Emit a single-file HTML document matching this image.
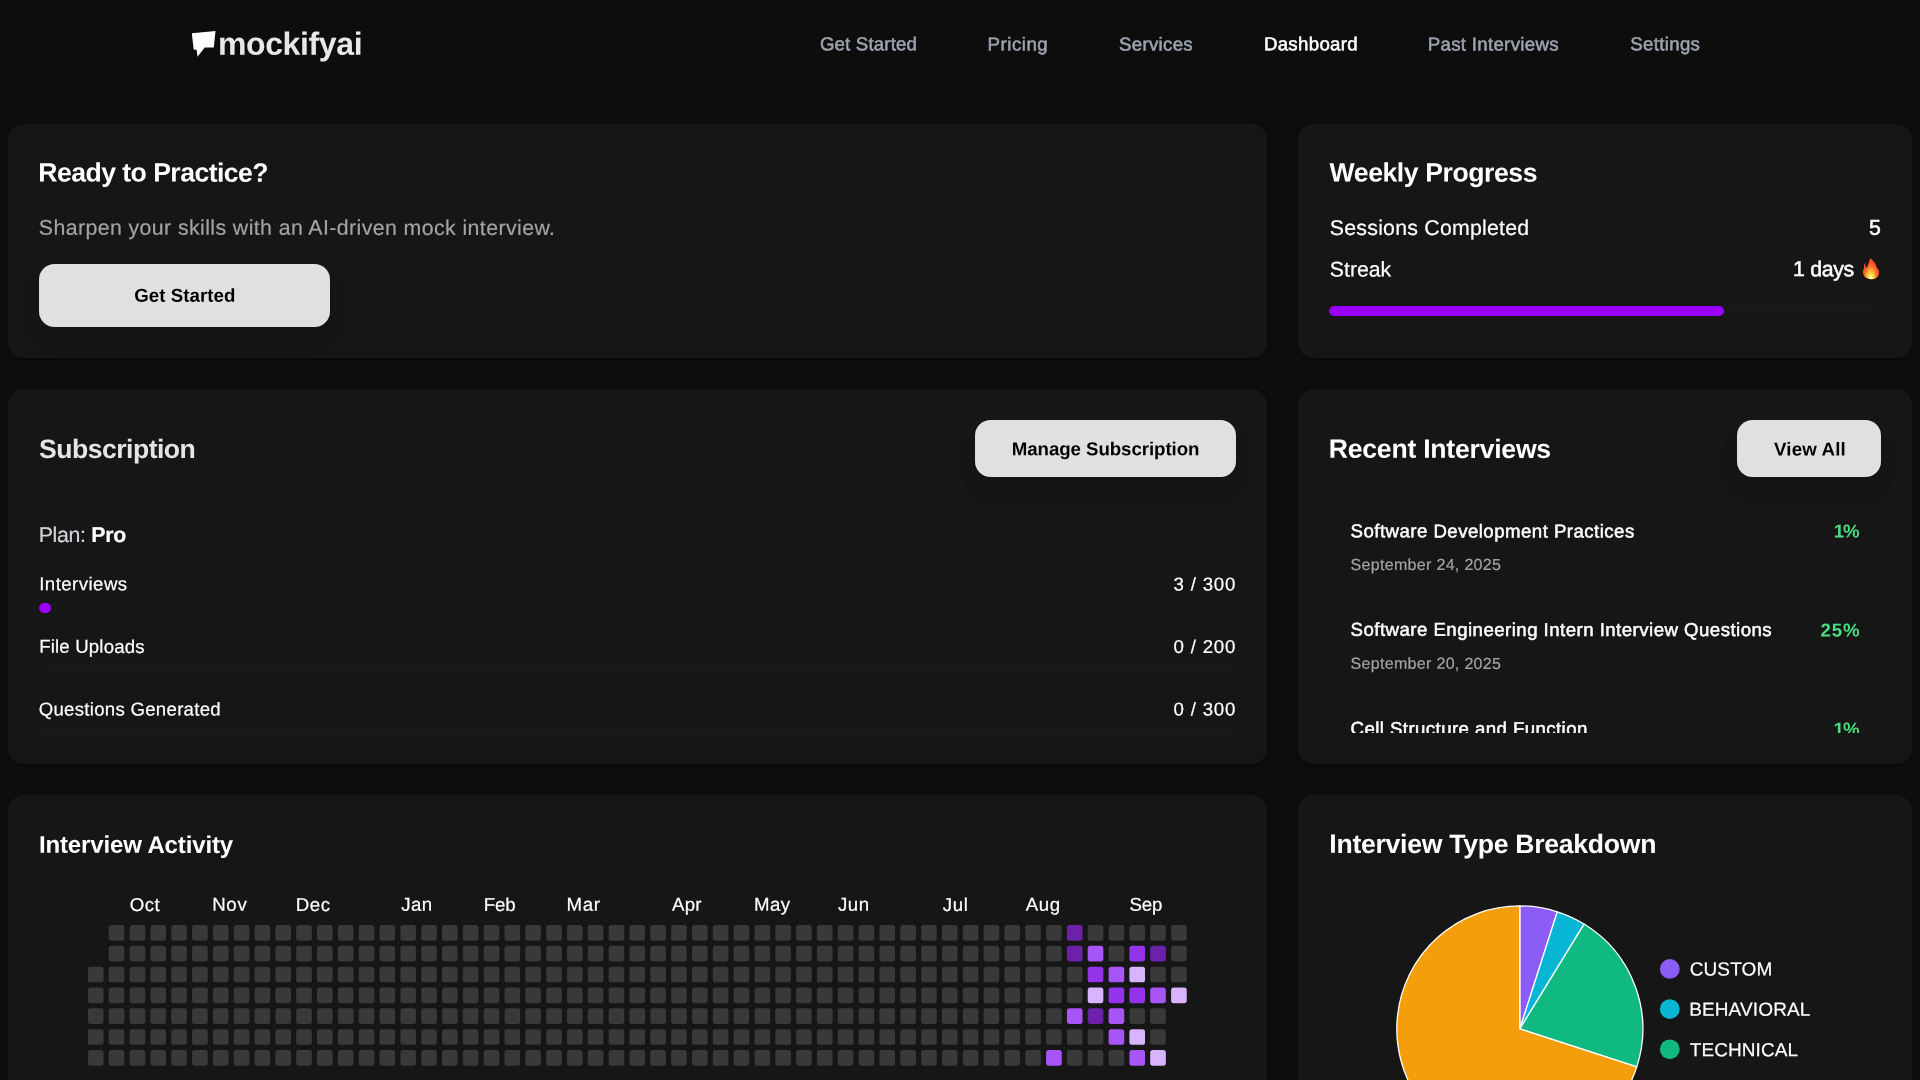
<!DOCTYPE html>
<html lang="en">
<head>
<meta charset="utf-8">
<title>mockifyai – Dashboard</title>
<style>
*{box-sizing:border-box;margin:0;padding:0}
html,body{width:1920px;height:1080px;overflow:hidden;background:#0d0d0d;font-family:"Liberation Sans",sans-serif}
body{position:relative;font-family:"Liberation Sans",sans-serif;color:#fff;-webkit-font-smoothing:antialiased}
#root{position:absolute;left:0;top:0;width:1920px;height:1080px;will-change:transform}
.abs{position:absolute}
.t{position:absolute;white-space:nowrap;line-height:1;-webkit-text-stroke:.2px currentColor;transform-origin:50% 50%;transform:rotate(0.03deg)}
.b{font-weight:700;-webkit-text-stroke:0}
.card{position:absolute;background:#161616;border-radius:15.6px;box-shadow:0 1.3px 4px rgba(0,0,0,.35)}
.btn span{display:inline-block;transform-origin:50% 50%;transform:rotate(0.03deg)}
.btn{position:absolute;background:#e0e0e0;border-radius:15.6px;color:#000;font-weight:700;display:flex;align-items:center;justify-content:center;white-space:nowrap;box-shadow:0 13px 19.5px -4px rgba(0,0,0,.12),0 5px 8px -5px rgba(0,0,0,.12)}
.nav{color:#9ca3af;font-size:18.65px;-webkit-text-stroke:.55px currentColor}
.h2{font-size:26.6px;font-weight:700;-webkit-text-stroke:0}
.track{position:absolute;height:10.4px;border-radius:5.2px;background:#181818}
.fill{position:absolute;left:0;top:0;height:100%;border-radius:5.2px;background:#9900ff}
.lbl{font-size:18.65px}
.med{-webkit-text-stroke:.5px currentColor}
.date{font-size:16px;color:#a3a3a3}
.mon{font-size:18.65px}
.leg{font-size:19px}
.green{-webkit-text-stroke:0;color:#4ade80;font-weight:700;font-size:18.7px}
#logo{letter-spacing:-0.362px;transform:translate(-1.10px,-0.26px) rotate(0.03deg)}
#n1{letter-spacing:0.175px;transform:translate(-0.10px,0.17px) rotate(0.03deg)}
#n2{letter-spacing:0.517px;transform:translate(-0.40px,0.41px) rotate(0.03deg)}
#n3{letter-spacing:0.314px;transform:translate(0.00px,0.45px) rotate(0.03deg)}
#n4{letter-spacing:0.322px;transform:translate(-0.10px,0.28px) rotate(0.03deg)}
#n5{letter-spacing:0.311px;transform:translate(-0.25px,0.42px) rotate(0.03deg)}
#n6{letter-spacing:0.320px;transform:translate(0.35px,0.23px) rotate(0.03deg)}
#c1t{letter-spacing:-0.542px;transform:translate(-0.65px,0.60px) rotate(0.03deg)}
#c1s{letter-spacing:0.411px;transform:translate(-0.20px,0.84px) rotate(0.03deg)}
#b1{letter-spacing:0.050px;transform:translate(1.15px,0.79px) rotate(0.03deg)}
#c2t{letter-spacing:-0.429px;transform:translate(-0.40px,0.60px) rotate(0.03deg)}
#c2a{letter-spacing:0.235px;transform:translate(-0.15px,0.96px) rotate(0.03deg)}
#c2b{letter-spacing:0.000px;transform:translate(0.00px,0.68px) rotate(0.03deg)}
#c2c{letter-spacing:-0.030px;transform:translate(-0.15px,1.42px) rotate(0.03deg)}
#c2d{letter-spacing:-0.330px;transform:translate(0.05px,1.14px) rotate(0.03deg)}
#c3t{letter-spacing:-0.525px;transform:translate(0.05px,0.99px) rotate(0.03deg)}
#b2{letter-spacing:-0.072px;transform:translate(-0.25px,0.25px) rotate(0.03deg)}
#c3p{letter-spacing:-0.310px;transform:translate(-0.35px,2.00px) rotate(0.03deg)}
#c3a{letter-spacing:0.449px;transform:translate(0.20px,0.35px) rotate(0.03deg)}
#c3av{letter-spacing:0.806px;transform:translate(0.55px,0.42px) rotate(0.03deg)}
#c3b{letter-spacing:0.166px;transform:translate(0.15px,0.87px) rotate(0.03deg)}
#c3bv{letter-spacing:0.804px;transform:translate(0.55px,0.95px) rotate(0.03deg)}
#c3c{letter-spacing:0.267px;transform:translate(-0.30px,1.49px) rotate(0.03deg)}
#c3cv{letter-spacing:0.804px;transform:translate(0.55px,1.48px) rotate(0.03deg)}
#c4t{letter-spacing:-0.234px;transform:translate(-1.25px,0.87px) rotate(0.03deg)}
#b3{letter-spacing:0.143px;transform:translate(1.05px,0.50px) rotate(0.03deg)}
#i1{letter-spacing:0.459px;transform:translate(0.55px,1.41px) rotate(0.03deg)}
#g1{letter-spacing:-1.300px;transform:translate(0.85px,1.47px) rotate(0.03deg)}
#d1{letter-spacing:0.318px;transform:translate(0.55px,0.00px) rotate(0.03deg)}
#i2{letter-spacing:0.459px;transform:translate(0.55px,0.93px) rotate(0.03deg)}
#g2{letter-spacing:0.875px;transform:translate(1.55px,1.53px) rotate(0.03deg)}
#d2{letter-spacing:0.318px;transform:translate(0.55px,0.86px) rotate(0.03deg)}
#i3{letter-spacing:0.419px;transform:translate(0.55px,0.93px) rotate(0.03deg)}
#g3{letter-spacing:-1.050px;transform:translate(0.60px,1.53px) rotate(0.03deg)}
#c5t{letter-spacing:-0.134px;transform:translate(-0.05px,0.87px) rotate(0.03deg)}
#c6t{letter-spacing:-0.279px;transform:translate(-0.65px,-0.04px) rotate(0.03deg)}
#mOct{letter-spacing:0.450px;transform:translate(-0.25px,1.90px) rotate(0.03deg)}
#mNov{letter-spacing:0.700px;transform:translate(-0.85px,1.87px) rotate(0.03deg)}
#mDec{letter-spacing:0.550px;transform:translate(-0.20px,1.95px) rotate(0.03deg)}
#mJan{letter-spacing:0.475px;transform:translate(1.20px,1.87px) rotate(0.03deg)}
#mFeb{letter-spacing:-0.100px;transform:translate(-0.35px,1.92px) rotate(0.03deg)}
#mMar{letter-spacing:0.750px;transform:translate(-0.55px,1.83px) rotate(0.03deg)}
#mApr{letter-spacing:0.225px;transform:translate(1.00px,1.87px) rotate(0.03deg)}
#mMay{letter-spacing:0.400px;transform:translate(-1.00px,1.87px) rotate(0.03deg)}
#mJun{letter-spacing:0.625px;transform:translate(-0.10px,1.81px) rotate(0.03deg)}
#mJul{letter-spacing:0.650px;transform:translate(0.75px,1.90px) rotate(0.03deg)}
#mAug{letter-spacing:0.500px;transform:translate(0.85px,1.85px) rotate(0.03deg)}
#mSep{letter-spacing:-0.125px;transform:translate(0.40px,1.84px) rotate(0.03deg)}
#lC{letter-spacing:0.140px;transform:translate(0.65px,0.43px) rotate(0.03deg)}
#lB{letter-spacing:0.134px;transform:translate(0.15px,-0.26px) rotate(0.03deg)}
#lT{letter-spacing:0.061px;transform:translate(0.80px,0.32px) rotate(0.03deg)}

</style>
</head>
<body>
<div id="root">

<!-- header -->
<svg class="abs" style="left:185px;top:25px" width="40" height="37" viewBox="185 25 40 37"><polygon fill="#fff" points="191.8,33.2 215.5,31 213.8,47.4 204.7,47.4 197.5,56.7 196.6,49.7 193.7,49.5"/></svg>
<div class="t b" id="logo"  style="left:218.5px;top:27.5px;font-size:32px;color:#e8e8e8">mockifyai</div>

<div class="t nav" id="n1" style="left:819.5px;top:34.5px">Get Started</div>
<div class="t nav" id="n2" style="left:988px;top:34.5px">Pricing</div>
<div class="t nav" id="n3" style="left:1118.5px;top:34.5px">Services</div>
<div class="t nav" id="n4" style="left:1264px;top:34.5px;color:#fff">Dashboard</div>
<div class="t nav" id="n5" style="left:1428px;top:34.5px">Past Interviews</div>
<div class="t nav" id="n6" style="left:1630px;top:34.5px">Settings</div>

<!-- cards -->
<div class="card" style="left:7.8px;top:123.8px;width:1259.2px;height:234px"></div>
<div class="card" style="left:1298.2px;top:123.8px;width:614px;height:234px"></div>
<div class="card" style="left:7.8px;top:389px;width:1259.2px;height:375px"></div>
<div class="card" style="left:1298.2px;top:389px;width:614px;height:375px"></div>
<div class="card" style="left:7.8px;top:794.6px;width:1259.2px;height:400px"></div>
<div class="card" style="left:1298.2px;top:794.6px;width:614px;height:400px"></div>

<!-- card 1 -->
<div class="t h2" id="c1t" style="left:38.5px;top:159px">Ready to Practice?</div>
<div class="t" id="c1s" style="left:38.5px;top:216.5px;font-size:21.3px;color:#a3a3a3">Sharpen your skills with an AI-driven mock interview.</div>
<div class="btn" style="left:38.6px;top:264.2px;width:291.4px;height:62.4px"></div>
<div class="t b" id="b1" style="left:133px;top:286px;font-size:18.7px;color:#000">Get Started</div>

<!-- card 2 -->
<div class="t h2" id="c2t" style="left:1329.5px;top:159px">Weekly Progress</div>
<div class="t" id="c2a" style="left:1329.5px;top:216.5px;font-size:21.3px">Sessions Completed</div>
<div class="t med" id="c2b" style="right:39px;top:216.5px;font-size:21.3px">5</div>
<div class="t" id="c2c" style="left:1329.5px;top:258px;font-size:21.3px">Streak</div>
<div class="t med" id="c2d" style="left:1793px;top:258px;font-size:21.3px">1 days</div>
<svg class="abs" style="left:1855px;top:252px" width="32" height="32" viewBox="0 0 32 32">
<defs>
<linearGradient id="fo" x1="0" y1="6" x2="0" y2="27" gradientUnits="userSpaceOnUse"><stop offset="0" stop-color="#f9562a"/><stop offset=".55" stop-color="#fb4a1e"/><stop offset="1" stop-color="#ee3a14"/></linearGradient>
<radialGradient id="fg" cx="0" cy="0" r="1" gradientUnits="userSpaceOnUse" gradientTransform="translate(15.7 26.2) scale(8.8 16.5)">
<stop offset="0" stop-color="#fffdf0"/><stop offset=".15" stop-color="#fff27a"/><stop offset=".33" stop-color="#ffd53f"/><stop offset=".55" stop-color="#ffa234" stop-opacity=".95"/><stop offset=".8" stop-color="#ff7a30" stop-opacity=".55"/><stop offset="1" stop-color="#ff6a2a" stop-opacity="0"/></radialGradient>
<clipPath id="fc"><path d="M15.4 6.1C16.6 7.3 18 8.7 19.2 10.2C20.3 11.6 21.1 13 21.4 14.3C21.6 15 21.7 15.5 21.7 15.9C22.9 16.6 23.7 17.7 24 19.2C24.3 20.8 24.1 22.3 23.4 23.6C22.7 24.9 21.6 25.8 20.3 26.4C19 27 17.5 27.25 16 27.2C14.4 27.2 12.9 26.8 11.6 26.1C10.3 25.4 9.3 24.3 8.6 22.9C8 21.7 7.8 20.6 7.85 19.6C7.9 18.3 8.4 17.1 9.2 16C8.8 14.9 8.75 13.9 9.05 13C9.35 12.2 9.9 11.5 10.6 11C10.3 12.1 10.25 13.1 10.45 14.1C10.6 15 10.9 15.8 11.3 16.6C12 15.3 12.5 14.1 12.9 13C13.4 11.8 13.8 10.6 14.2 9.5C14.6 8.3 15 7.2 15.4 6.1Z"/></clipPath>
</defs>
<path d="M15.4 6.1C16.6 7.3 18 8.7 19.2 10.2C20.3 11.6 21.1 13 21.4 14.3C21.6 15 21.7 15.5 21.7 15.9C22.9 16.6 23.7 17.7 24 19.2C24.3 20.8 24.1 22.3 23.4 23.6C22.7 24.9 21.6 25.8 20.3 26.4C19 27 17.5 27.25 16 27.2C14.4 27.2 12.9 26.8 11.6 26.1C10.3 25.4 9.3 24.3 8.6 22.9C8 21.7 7.8 20.6 7.85 19.6C7.9 18.3 8.4 17.1 9.2 16C8.8 14.9 8.75 13.9 9.05 13C9.35 12.2 9.9 11.5 10.6 11C10.3 12.1 10.25 13.1 10.45 14.1C10.6 15 10.9 15.8 11.3 16.6C12 15.3 12.5 14.1 12.9 13C13.4 11.8 13.8 10.6 14.2 9.5C14.6 8.3 15 7.2 15.4 6.1Z" fill="url(#fo)"/>
<g clip-path="url(#fc)"><rect x="6" y="5" width="20" height="23" fill="url(#fg)"/></g>
</svg>
<div class="track" style="left:1329.4px;top:305.8px;width:551.6px"><div class="fill" style="width:394.3px"></div></div>

<!-- card 3 -->
<div class="t h2" id="c3t" style="left:38.5px;top:435.2px;color:#e5e5e5">Subscription</div>
<div class="btn" style="left:975.3px;top:420.2px;width:260.7px;height:57.2px;font-size:18.7px"><span id="b2">Manage Subscription</span></div>
<div class="t" id="c3p" style="left:38.5px;top:523.2px;font-size:21.3px;color:#d1d5db">Plan: <b style="color:#fff">Pro</b></div>
<div class="t lbl" id="c3a" style="left:38.5px;top:574.7px">Interviews</div>
<div class="t lbl" id="c3av" style="right:684.4px;top:574.7px">3 / 300</div>
<div class="track" style="left:38.8px;top:602.5px;width:1197px"><div class="fill" style="width:12px"></div></div>
<div class="t lbl" id="c3b" style="left:38.5px;top:637px">File Uploads</div>
<div class="t lbl" id="c3bv" style="right:684.4px;top:637px">0 / 200</div>
<div class="track" style="left:38.8px;top:665.8px;width:1197px"></div>
<div class="t lbl" id="c3c" style="left:38.5px;top:699.4px">Questions Generated</div>
<div class="t lbl" id="c3cv" style="right:684.4px;top:699.4px">0 / 300</div>
<div class="track" style="left:38.8px;top:727.6px;width:1197px"></div>

<!-- card 4 -->
<div class="t h2" id="c4t" style="left:1329.5px;top:435.2px">Recent Interviews</div>
<div class="btn" style="left:1737.4px;top:420.2px;width:143.6px;height:57.2px;font-size:18.7px"><span id="b3">View All</span></div>
<div class="abs" style="left:1329.4px;top:500px;width:551.6px;height:232.6px;overflow:hidden">
  <div class="t lbl med" id="i1" style="left:20.8px;top:21px">Software Development Practices</div>
  <div class="t green" id="g1" style="left:504px;top:21px">1%</div>
  <div class="t date" id="d1" style="left:20.8px;top:56.5px">September 24, 2025</div>
  <div class="t lbl med" id="i2" style="left:20.8px;top:119.9px">Software Engineering Intern Interview Questions</div>
  <div class="t green" id="g2" style="left:490px;top:119.9px">25%</div>
  <div class="t date" id="d2" style="left:20.8px;top:155.4px">September 20, 2025</div>
  <div class="t lbl med" id="i3" style="left:20.8px;top:218.8px">Cell Structure and Function</div>
  <div class="t green" id="g3" style="left:504px;top:218.8px">1%</div>
</div>

<!-- card 5 -->
<div class="t h2" id="c5t" style="left:38.5px;top:831.5px;font-size:24px">Interview Activity</div>
<svg class="abs" style="left:0;top:0" width="1920" height="1080" viewBox="0 0 1920 1080"><rect x="87.9" y="966.7" width="15.65" height="15.65" rx="2.6" fill="#393939"/><rect x="87.9" y="987.5" width="15.65" height="15.65" rx="2.6" fill="#393939"/><rect x="87.9" y="1008.3" width="15.65" height="15.65" rx="2.6" fill="#393939"/><rect x="87.9" y="1029.2" width="15.65" height="15.65" rx="2.6" fill="#393939"/><rect x="87.9" y="1050.0" width="15.65" height="15.65" rx="2.6" fill="#393939"/><rect x="108.7" y="925.0" width="15.65" height="15.65" rx="2.6" fill="#393939"/><rect x="108.7" y="945.8" width="15.65" height="15.65" rx="2.6" fill="#393939"/><rect x="108.7" y="966.7" width="15.65" height="15.65" rx="2.6" fill="#393939"/><rect x="108.7" y="987.5" width="15.65" height="15.65" rx="2.6" fill="#393939"/><rect x="108.7" y="1008.3" width="15.65" height="15.65" rx="2.6" fill="#393939"/><rect x="108.7" y="1029.2" width="15.65" height="15.65" rx="2.6" fill="#393939"/><rect x="108.7" y="1050.0" width="15.65" height="15.65" rx="2.6" fill="#393939"/><rect x="129.6" y="925.0" width="15.65" height="15.65" rx="2.6" fill="#393939"/><rect x="129.6" y="945.8" width="15.65" height="15.65" rx="2.6" fill="#393939"/><rect x="129.6" y="966.7" width="15.65" height="15.65" rx="2.6" fill="#393939"/><rect x="129.6" y="987.5" width="15.65" height="15.65" rx="2.6" fill="#393939"/><rect x="129.6" y="1008.3" width="15.65" height="15.65" rx="2.6" fill="#393939"/><rect x="129.6" y="1029.2" width="15.65" height="15.65" rx="2.6" fill="#393939"/><rect x="129.6" y="1050.0" width="15.65" height="15.65" rx="2.6" fill="#393939"/><rect x="150.4" y="925.0" width="15.65" height="15.65" rx="2.6" fill="#393939"/><rect x="150.4" y="945.8" width="15.65" height="15.65" rx="2.6" fill="#393939"/><rect x="150.4" y="966.7" width="15.65" height="15.65" rx="2.6" fill="#393939"/><rect x="150.4" y="987.5" width="15.65" height="15.65" rx="2.6" fill="#393939"/><rect x="150.4" y="1008.3" width="15.65" height="15.65" rx="2.6" fill="#393939"/><rect x="150.4" y="1029.2" width="15.65" height="15.65" rx="2.6" fill="#393939"/><rect x="150.4" y="1050.0" width="15.65" height="15.65" rx="2.6" fill="#393939"/><rect x="171.2" y="925.0" width="15.65" height="15.65" rx="2.6" fill="#393939"/><rect x="171.2" y="945.8" width="15.65" height="15.65" rx="2.6" fill="#393939"/><rect x="171.2" y="966.7" width="15.65" height="15.65" rx="2.6" fill="#393939"/><rect x="171.2" y="987.5" width="15.65" height="15.65" rx="2.6" fill="#393939"/><rect x="171.2" y="1008.3" width="15.65" height="15.65" rx="2.6" fill="#393939"/><rect x="171.2" y="1029.2" width="15.65" height="15.65" rx="2.6" fill="#393939"/><rect x="171.2" y="1050.0" width="15.65" height="15.65" rx="2.6" fill="#393939"/><rect x="192.1" y="925.0" width="15.65" height="15.65" rx="2.6" fill="#393939"/><rect x="192.1" y="945.8" width="15.65" height="15.65" rx="2.6" fill="#393939"/><rect x="192.1" y="966.7" width="15.65" height="15.65" rx="2.6" fill="#393939"/><rect x="192.1" y="987.5" width="15.65" height="15.65" rx="2.6" fill="#393939"/><rect x="192.1" y="1008.3" width="15.65" height="15.65" rx="2.6" fill="#393939"/><rect x="192.1" y="1029.2" width="15.65" height="15.65" rx="2.6" fill="#393939"/><rect x="192.1" y="1050.0" width="15.65" height="15.65" rx="2.6" fill="#393939"/><rect x="212.9" y="925.0" width="15.65" height="15.65" rx="2.6" fill="#393939"/><rect x="212.9" y="945.8" width="15.65" height="15.65" rx="2.6" fill="#393939"/><rect x="212.9" y="966.7" width="15.65" height="15.65" rx="2.6" fill="#393939"/><rect x="212.9" y="987.5" width="15.65" height="15.65" rx="2.6" fill="#393939"/><rect x="212.9" y="1008.3" width="15.65" height="15.65" rx="2.6" fill="#393939"/><rect x="212.9" y="1029.2" width="15.65" height="15.65" rx="2.6" fill="#393939"/><rect x="212.9" y="1050.0" width="15.65" height="15.65" rx="2.6" fill="#393939"/><rect x="233.7" y="925.0" width="15.65" height="15.65" rx="2.6" fill="#393939"/><rect x="233.7" y="945.8" width="15.65" height="15.65" rx="2.6" fill="#393939"/><rect x="233.7" y="966.7" width="15.65" height="15.65" rx="2.6" fill="#393939"/><rect x="233.7" y="987.5" width="15.65" height="15.65" rx="2.6" fill="#393939"/><rect x="233.7" y="1008.3" width="15.65" height="15.65" rx="2.6" fill="#393939"/><rect x="233.7" y="1029.2" width="15.65" height="15.65" rx="2.6" fill="#393939"/><rect x="233.7" y="1050.0" width="15.65" height="15.65" rx="2.6" fill="#393939"/><rect x="254.5" y="925.0" width="15.65" height="15.65" rx="2.6" fill="#393939"/><rect x="254.5" y="945.8" width="15.65" height="15.65" rx="2.6" fill="#393939"/><rect x="254.5" y="966.7" width="15.65" height="15.65" rx="2.6" fill="#393939"/><rect x="254.5" y="987.5" width="15.65" height="15.65" rx="2.6" fill="#393939"/><rect x="254.5" y="1008.3" width="15.65" height="15.65" rx="2.6" fill="#393939"/><rect x="254.5" y="1029.2" width="15.65" height="15.65" rx="2.6" fill="#393939"/><rect x="254.5" y="1050.0" width="15.65" height="15.65" rx="2.6" fill="#393939"/><rect x="275.4" y="925.0" width="15.65" height="15.65" rx="2.6" fill="#393939"/><rect x="275.4" y="945.8" width="15.65" height="15.65" rx="2.6" fill="#393939"/><rect x="275.4" y="966.7" width="15.65" height="15.65" rx="2.6" fill="#393939"/><rect x="275.4" y="987.5" width="15.65" height="15.65" rx="2.6" fill="#393939"/><rect x="275.4" y="1008.3" width="15.65" height="15.65" rx="2.6" fill="#393939"/><rect x="275.4" y="1029.2" width="15.65" height="15.65" rx="2.6" fill="#393939"/><rect x="275.4" y="1050.0" width="15.65" height="15.65" rx="2.6" fill="#393939"/><rect x="296.2" y="925.0" width="15.65" height="15.65" rx="2.6" fill="#393939"/><rect x="296.2" y="945.8" width="15.65" height="15.65" rx="2.6" fill="#393939"/><rect x="296.2" y="966.7" width="15.65" height="15.65" rx="2.6" fill="#393939"/><rect x="296.2" y="987.5" width="15.65" height="15.65" rx="2.6" fill="#393939"/><rect x="296.2" y="1008.3" width="15.65" height="15.65" rx="2.6" fill="#393939"/><rect x="296.2" y="1029.2" width="15.65" height="15.65" rx="2.6" fill="#393939"/><rect x="296.2" y="1050.0" width="15.65" height="15.65" rx="2.6" fill="#393939"/><rect x="317.0" y="925.0" width="15.65" height="15.65" rx="2.6" fill="#393939"/><rect x="317.0" y="945.8" width="15.65" height="15.65" rx="2.6" fill="#393939"/><rect x="317.0" y="966.7" width="15.65" height="15.65" rx="2.6" fill="#393939"/><rect x="317.0" y="987.5" width="15.65" height="15.65" rx="2.6" fill="#393939"/><rect x="317.0" y="1008.3" width="15.65" height="15.65" rx="2.6" fill="#393939"/><rect x="317.0" y="1029.2" width="15.65" height="15.65" rx="2.6" fill="#393939"/><rect x="317.0" y="1050.0" width="15.65" height="15.65" rx="2.6" fill="#393939"/><rect x="337.9" y="925.0" width="15.65" height="15.65" rx="2.6" fill="#393939"/><rect x="337.9" y="945.8" width="15.65" height="15.65" rx="2.6" fill="#393939"/><rect x="337.9" y="966.7" width="15.65" height="15.65" rx="2.6" fill="#393939"/><rect x="337.9" y="987.5" width="15.65" height="15.65" rx="2.6" fill="#393939"/><rect x="337.9" y="1008.3" width="15.65" height="15.65" rx="2.6" fill="#393939"/><rect x="337.9" y="1029.2" width="15.65" height="15.65" rx="2.6" fill="#393939"/><rect x="337.9" y="1050.0" width="15.65" height="15.65" rx="2.6" fill="#393939"/><rect x="358.7" y="925.0" width="15.65" height="15.65" rx="2.6" fill="#393939"/><rect x="358.7" y="945.8" width="15.65" height="15.65" rx="2.6" fill="#393939"/><rect x="358.7" y="966.7" width="15.65" height="15.65" rx="2.6" fill="#393939"/><rect x="358.7" y="987.5" width="15.65" height="15.65" rx="2.6" fill="#393939"/><rect x="358.7" y="1008.3" width="15.65" height="15.65" rx="2.6" fill="#393939"/><rect x="358.7" y="1029.2" width="15.65" height="15.65" rx="2.6" fill="#393939"/><rect x="358.7" y="1050.0" width="15.65" height="15.65" rx="2.6" fill="#393939"/><rect x="379.5" y="925.0" width="15.65" height="15.65" rx="2.6" fill="#393939"/><rect x="379.5" y="945.8" width="15.65" height="15.65" rx="2.6" fill="#393939"/><rect x="379.5" y="966.7" width="15.65" height="15.65" rx="2.6" fill="#393939"/><rect x="379.5" y="987.5" width="15.65" height="15.65" rx="2.6" fill="#393939"/><rect x="379.5" y="1008.3" width="15.65" height="15.65" rx="2.6" fill="#393939"/><rect x="379.5" y="1029.2" width="15.65" height="15.65" rx="2.6" fill="#393939"/><rect x="379.5" y="1050.0" width="15.65" height="15.65" rx="2.6" fill="#393939"/><rect x="400.4" y="925.0" width="15.65" height="15.65" rx="2.6" fill="#393939"/><rect x="400.4" y="945.8" width="15.65" height="15.65" rx="2.6" fill="#393939"/><rect x="400.4" y="966.7" width="15.65" height="15.65" rx="2.6" fill="#393939"/><rect x="400.4" y="987.5" width="15.65" height="15.65" rx="2.6" fill="#393939"/><rect x="400.4" y="1008.3" width="15.65" height="15.65" rx="2.6" fill="#393939"/><rect x="400.4" y="1029.2" width="15.65" height="15.65" rx="2.6" fill="#393939"/><rect x="400.4" y="1050.0" width="15.65" height="15.65" rx="2.6" fill="#393939"/><rect x="421.2" y="925.0" width="15.65" height="15.65" rx="2.6" fill="#393939"/><rect x="421.2" y="945.8" width="15.65" height="15.65" rx="2.6" fill="#393939"/><rect x="421.2" y="966.7" width="15.65" height="15.65" rx="2.6" fill="#393939"/><rect x="421.2" y="987.5" width="15.65" height="15.65" rx="2.6" fill="#393939"/><rect x="421.2" y="1008.3" width="15.65" height="15.65" rx="2.6" fill="#393939"/><rect x="421.2" y="1029.2" width="15.65" height="15.65" rx="2.6" fill="#393939"/><rect x="421.2" y="1050.0" width="15.65" height="15.65" rx="2.6" fill="#393939"/><rect x="442.0" y="925.0" width="15.65" height="15.65" rx="2.6" fill="#393939"/><rect x="442.0" y="945.8" width="15.65" height="15.65" rx="2.6" fill="#393939"/><rect x="442.0" y="966.7" width="15.65" height="15.65" rx="2.6" fill="#393939"/><rect x="442.0" y="987.5" width="15.65" height="15.65" rx="2.6" fill="#393939"/><rect x="442.0" y="1008.3" width="15.65" height="15.65" rx="2.6" fill="#393939"/><rect x="442.0" y="1029.2" width="15.65" height="15.65" rx="2.6" fill="#393939"/><rect x="442.0" y="1050.0" width="15.65" height="15.65" rx="2.6" fill="#393939"/><rect x="462.8" y="925.0" width="15.65" height="15.65" rx="2.6" fill="#393939"/><rect x="462.8" y="945.8" width="15.65" height="15.65" rx="2.6" fill="#393939"/><rect x="462.8" y="966.7" width="15.65" height="15.65" rx="2.6" fill="#393939"/><rect x="462.8" y="987.5" width="15.65" height="15.65" rx="2.6" fill="#393939"/><rect x="462.8" y="1008.3" width="15.65" height="15.65" rx="2.6" fill="#393939"/><rect x="462.8" y="1029.2" width="15.65" height="15.65" rx="2.6" fill="#393939"/><rect x="462.8" y="1050.0" width="15.65" height="15.65" rx="2.6" fill="#393939"/><rect x="483.7" y="925.0" width="15.65" height="15.65" rx="2.6" fill="#393939"/><rect x="483.7" y="945.8" width="15.65" height="15.65" rx="2.6" fill="#393939"/><rect x="483.7" y="966.7" width="15.65" height="15.65" rx="2.6" fill="#393939"/><rect x="483.7" y="987.5" width="15.65" height="15.65" rx="2.6" fill="#393939"/><rect x="483.7" y="1008.3" width="15.65" height="15.65" rx="2.6" fill="#393939"/><rect x="483.7" y="1029.2" width="15.65" height="15.65" rx="2.6" fill="#393939"/><rect x="483.7" y="1050.0" width="15.65" height="15.65" rx="2.6" fill="#393939"/><rect x="504.5" y="925.0" width="15.65" height="15.65" rx="2.6" fill="#393939"/><rect x="504.5" y="945.8" width="15.65" height="15.65" rx="2.6" fill="#393939"/><rect x="504.5" y="966.7" width="15.65" height="15.65" rx="2.6" fill="#393939"/><rect x="504.5" y="987.5" width="15.65" height="15.65" rx="2.6" fill="#393939"/><rect x="504.5" y="1008.3" width="15.65" height="15.65" rx="2.6" fill="#393939"/><rect x="504.5" y="1029.2" width="15.65" height="15.65" rx="2.6" fill="#393939"/><rect x="504.5" y="1050.0" width="15.65" height="15.65" rx="2.6" fill="#393939"/><rect x="525.3" y="925.0" width="15.65" height="15.65" rx="2.6" fill="#393939"/><rect x="525.3" y="945.8" width="15.65" height="15.65" rx="2.6" fill="#393939"/><rect x="525.3" y="966.7" width="15.65" height="15.65" rx="2.6" fill="#393939"/><rect x="525.3" y="987.5" width="15.65" height="15.65" rx="2.6" fill="#393939"/><rect x="525.3" y="1008.3" width="15.65" height="15.65" rx="2.6" fill="#393939"/><rect x="525.3" y="1029.2" width="15.65" height="15.65" rx="2.6" fill="#393939"/><rect x="525.3" y="1050.0" width="15.65" height="15.65" rx="2.6" fill="#393939"/><rect x="546.2" y="925.0" width="15.65" height="15.65" rx="2.6" fill="#393939"/><rect x="546.2" y="945.8" width="15.65" height="15.65" rx="2.6" fill="#393939"/><rect x="546.2" y="966.7" width="15.65" height="15.65" rx="2.6" fill="#393939"/><rect x="546.2" y="987.5" width="15.65" height="15.65" rx="2.6" fill="#393939"/><rect x="546.2" y="1008.3" width="15.65" height="15.65" rx="2.6" fill="#393939"/><rect x="546.2" y="1029.2" width="15.65" height="15.65" rx="2.6" fill="#393939"/><rect x="546.2" y="1050.0" width="15.65" height="15.65" rx="2.6" fill="#393939"/><rect x="567.0" y="925.0" width="15.65" height="15.65" rx="2.6" fill="#393939"/><rect x="567.0" y="945.8" width="15.65" height="15.65" rx="2.6" fill="#393939"/><rect x="567.0" y="966.7" width="15.65" height="15.65" rx="2.6" fill="#393939"/><rect x="567.0" y="987.5" width="15.65" height="15.65" rx="2.6" fill="#393939"/><rect x="567.0" y="1008.3" width="15.65" height="15.65" rx="2.6" fill="#393939"/><rect x="567.0" y="1029.2" width="15.65" height="15.65" rx="2.6" fill="#393939"/><rect x="567.0" y="1050.0" width="15.65" height="15.65" rx="2.6" fill="#393939"/><rect x="587.8" y="925.0" width="15.65" height="15.65" rx="2.6" fill="#393939"/><rect x="587.8" y="945.8" width="15.65" height="15.65" rx="2.6" fill="#393939"/><rect x="587.8" y="966.7" width="15.65" height="15.65" rx="2.6" fill="#393939"/><rect x="587.8" y="987.5" width="15.65" height="15.65" rx="2.6" fill="#393939"/><rect x="587.8" y="1008.3" width="15.65" height="15.65" rx="2.6" fill="#393939"/><rect x="587.8" y="1029.2" width="15.65" height="15.65" rx="2.6" fill="#393939"/><rect x="587.8" y="1050.0" width="15.65" height="15.65" rx="2.6" fill="#393939"/><rect x="608.6" y="925.0" width="15.65" height="15.65" rx="2.6" fill="#393939"/><rect x="608.6" y="945.8" width="15.65" height="15.65" rx="2.6" fill="#393939"/><rect x="608.6" y="966.7" width="15.65" height="15.65" rx="2.6" fill="#393939"/><rect x="608.6" y="987.5" width="15.65" height="15.65" rx="2.6" fill="#393939"/><rect x="608.6" y="1008.3" width="15.65" height="15.65" rx="2.6" fill="#393939"/><rect x="608.6" y="1029.2" width="15.65" height="15.65" rx="2.6" fill="#393939"/><rect x="608.6" y="1050.0" width="15.65" height="15.65" rx="2.6" fill="#393939"/><rect x="629.5" y="925.0" width="15.65" height="15.65" rx="2.6" fill="#393939"/><rect x="629.5" y="945.8" width="15.65" height="15.65" rx="2.6" fill="#393939"/><rect x="629.5" y="966.7" width="15.65" height="15.65" rx="2.6" fill="#393939"/><rect x="629.5" y="987.5" width="15.65" height="15.65" rx="2.6" fill="#393939"/><rect x="629.5" y="1008.3" width="15.65" height="15.65" rx="2.6" fill="#393939"/><rect x="629.5" y="1029.2" width="15.65" height="15.65" rx="2.6" fill="#393939"/><rect x="629.5" y="1050.0" width="15.65" height="15.65" rx="2.6" fill="#393939"/><rect x="650.3" y="925.0" width="15.65" height="15.65" rx="2.6" fill="#393939"/><rect x="650.3" y="945.8" width="15.65" height="15.65" rx="2.6" fill="#393939"/><rect x="650.3" y="966.7" width="15.65" height="15.65" rx="2.6" fill="#393939"/><rect x="650.3" y="987.5" width="15.65" height="15.65" rx="2.6" fill="#393939"/><rect x="650.3" y="1008.3" width="15.65" height="15.65" rx="2.6" fill="#393939"/><rect x="650.3" y="1029.2" width="15.65" height="15.65" rx="2.6" fill="#393939"/><rect x="650.3" y="1050.0" width="15.65" height="15.65" rx="2.6" fill="#393939"/><rect x="671.1" y="925.0" width="15.65" height="15.65" rx="2.6" fill="#393939"/><rect x="671.1" y="945.8" width="15.65" height="15.65" rx="2.6" fill="#393939"/><rect x="671.1" y="966.7" width="15.65" height="15.65" rx="2.6" fill="#393939"/><rect x="671.1" y="987.5" width="15.65" height="15.65" rx="2.6" fill="#393939"/><rect x="671.1" y="1008.3" width="15.65" height="15.65" rx="2.6" fill="#393939"/><rect x="671.1" y="1029.2" width="15.65" height="15.65" rx="2.6" fill="#393939"/><rect x="671.1" y="1050.0" width="15.65" height="15.65" rx="2.6" fill="#393939"/><rect x="692.0" y="925.0" width="15.65" height="15.65" rx="2.6" fill="#393939"/><rect x="692.0" y="945.8" width="15.65" height="15.65" rx="2.6" fill="#393939"/><rect x="692.0" y="966.7" width="15.65" height="15.65" rx="2.6" fill="#393939"/><rect x="692.0" y="987.5" width="15.65" height="15.65" rx="2.6" fill="#393939"/><rect x="692.0" y="1008.3" width="15.65" height="15.65" rx="2.6" fill="#393939"/><rect x="692.0" y="1029.2" width="15.65" height="15.65" rx="2.6" fill="#393939"/><rect x="692.0" y="1050.0" width="15.65" height="15.65" rx="2.6" fill="#393939"/><rect x="712.8" y="925.0" width="15.65" height="15.65" rx="2.6" fill="#393939"/><rect x="712.8" y="945.8" width="15.65" height="15.65" rx="2.6" fill="#393939"/><rect x="712.8" y="966.7" width="15.65" height="15.65" rx="2.6" fill="#393939"/><rect x="712.8" y="987.5" width="15.65" height="15.65" rx="2.6" fill="#393939"/><rect x="712.8" y="1008.3" width="15.65" height="15.65" rx="2.6" fill="#393939"/><rect x="712.8" y="1029.2" width="15.65" height="15.65" rx="2.6" fill="#393939"/><rect x="712.8" y="1050.0" width="15.65" height="15.65" rx="2.6" fill="#393939"/><rect x="733.6" y="925.0" width="15.65" height="15.65" rx="2.6" fill="#393939"/><rect x="733.6" y="945.8" width="15.65" height="15.65" rx="2.6" fill="#393939"/><rect x="733.6" y="966.7" width="15.65" height="15.65" rx="2.6" fill="#393939"/><rect x="733.6" y="987.5" width="15.65" height="15.65" rx="2.6" fill="#393939"/><rect x="733.6" y="1008.3" width="15.65" height="15.65" rx="2.6" fill="#393939"/><rect x="733.6" y="1029.2" width="15.65" height="15.65" rx="2.6" fill="#393939"/><rect x="733.6" y="1050.0" width="15.65" height="15.65" rx="2.6" fill="#393939"/><rect x="754.5" y="925.0" width="15.65" height="15.65" rx="2.6" fill="#393939"/><rect x="754.5" y="945.8" width="15.65" height="15.65" rx="2.6" fill="#393939"/><rect x="754.5" y="966.7" width="15.65" height="15.65" rx="2.6" fill="#393939"/><rect x="754.5" y="987.5" width="15.65" height="15.65" rx="2.6" fill="#393939"/><rect x="754.5" y="1008.3" width="15.65" height="15.65" rx="2.6" fill="#393939"/><rect x="754.5" y="1029.2" width="15.65" height="15.65" rx="2.6" fill="#393939"/><rect x="754.5" y="1050.0" width="15.65" height="15.65" rx="2.6" fill="#393939"/><rect x="775.3" y="925.0" width="15.65" height="15.65" rx="2.6" fill="#393939"/><rect x="775.3" y="945.8" width="15.65" height="15.65" rx="2.6" fill="#393939"/><rect x="775.3" y="966.7" width="15.65" height="15.65" rx="2.6" fill="#393939"/><rect x="775.3" y="987.5" width="15.65" height="15.65" rx="2.6" fill="#393939"/><rect x="775.3" y="1008.3" width="15.65" height="15.65" rx="2.6" fill="#393939"/><rect x="775.3" y="1029.2" width="15.65" height="15.65" rx="2.6" fill="#393939"/><rect x="775.3" y="1050.0" width="15.65" height="15.65" rx="2.6" fill="#393939"/><rect x="796.1" y="925.0" width="15.65" height="15.65" rx="2.6" fill="#393939"/><rect x="796.1" y="945.8" width="15.65" height="15.65" rx="2.6" fill="#393939"/><rect x="796.1" y="966.7" width="15.65" height="15.65" rx="2.6" fill="#393939"/><rect x="796.1" y="987.5" width="15.65" height="15.65" rx="2.6" fill="#393939"/><rect x="796.1" y="1008.3" width="15.65" height="15.65" rx="2.6" fill="#393939"/><rect x="796.1" y="1029.2" width="15.65" height="15.65" rx="2.6" fill="#393939"/><rect x="796.1" y="1050.0" width="15.65" height="15.65" rx="2.6" fill="#393939"/><rect x="816.9" y="925.0" width="15.65" height="15.65" rx="2.6" fill="#393939"/><rect x="816.9" y="945.8" width="15.65" height="15.65" rx="2.6" fill="#393939"/><rect x="816.9" y="966.7" width="15.65" height="15.65" rx="2.6" fill="#393939"/><rect x="816.9" y="987.5" width="15.65" height="15.65" rx="2.6" fill="#393939"/><rect x="816.9" y="1008.3" width="15.65" height="15.65" rx="2.6" fill="#393939"/><rect x="816.9" y="1029.2" width="15.65" height="15.65" rx="2.6" fill="#393939"/><rect x="816.9" y="1050.0" width="15.65" height="15.65" rx="2.6" fill="#393939"/><rect x="837.8" y="925.0" width="15.65" height="15.65" rx="2.6" fill="#393939"/><rect x="837.8" y="945.8" width="15.65" height="15.65" rx="2.6" fill="#393939"/><rect x="837.8" y="966.7" width="15.65" height="15.65" rx="2.6" fill="#393939"/><rect x="837.8" y="987.5" width="15.65" height="15.65" rx="2.6" fill="#393939"/><rect x="837.8" y="1008.3" width="15.65" height="15.65" rx="2.6" fill="#393939"/><rect x="837.8" y="1029.2" width="15.65" height="15.65" rx="2.6" fill="#393939"/><rect x="837.8" y="1050.0" width="15.65" height="15.65" rx="2.6" fill="#393939"/><rect x="858.6" y="925.0" width="15.65" height="15.65" rx="2.6" fill="#393939"/><rect x="858.6" y="945.8" width="15.65" height="15.65" rx="2.6" fill="#393939"/><rect x="858.6" y="966.7" width="15.65" height="15.65" rx="2.6" fill="#393939"/><rect x="858.6" y="987.5" width="15.65" height="15.65" rx="2.6" fill="#393939"/><rect x="858.6" y="1008.3" width="15.65" height="15.65" rx="2.6" fill="#393939"/><rect x="858.6" y="1029.2" width="15.65" height="15.65" rx="2.6" fill="#393939"/><rect x="858.6" y="1050.0" width="15.65" height="15.65" rx="2.6" fill="#393939"/><rect x="879.4" y="925.0" width="15.65" height="15.65" rx="2.6" fill="#393939"/><rect x="879.4" y="945.8" width="15.65" height="15.65" rx="2.6" fill="#393939"/><rect x="879.4" y="966.7" width="15.65" height="15.65" rx="2.6" fill="#393939"/><rect x="879.4" y="987.5" width="15.65" height="15.65" rx="2.6" fill="#393939"/><rect x="879.4" y="1008.3" width="15.65" height="15.65" rx="2.6" fill="#393939"/><rect x="879.4" y="1029.2" width="15.65" height="15.65" rx="2.6" fill="#393939"/><rect x="879.4" y="1050.0" width="15.65" height="15.65" rx="2.6" fill="#393939"/><rect x="900.3" y="925.0" width="15.65" height="15.65" rx="2.6" fill="#393939"/><rect x="900.3" y="945.8" width="15.65" height="15.65" rx="2.6" fill="#393939"/><rect x="900.3" y="966.7" width="15.65" height="15.65" rx="2.6" fill="#393939"/><rect x="900.3" y="987.5" width="15.65" height="15.65" rx="2.6" fill="#393939"/><rect x="900.3" y="1008.3" width="15.65" height="15.65" rx="2.6" fill="#393939"/><rect x="900.3" y="1029.2" width="15.65" height="15.65" rx="2.6" fill="#393939"/><rect x="900.3" y="1050.0" width="15.65" height="15.65" rx="2.6" fill="#393939"/><rect x="921.1" y="925.0" width="15.65" height="15.65" rx="2.6" fill="#393939"/><rect x="921.1" y="945.8" width="15.65" height="15.65" rx="2.6" fill="#393939"/><rect x="921.1" y="966.7" width="15.65" height="15.65" rx="2.6" fill="#393939"/><rect x="921.1" y="987.5" width="15.65" height="15.65" rx="2.6" fill="#393939"/><rect x="921.1" y="1008.3" width="15.65" height="15.65" rx="2.6" fill="#393939"/><rect x="921.1" y="1029.2" width="15.65" height="15.65" rx="2.6" fill="#393939"/><rect x="921.1" y="1050.0" width="15.65" height="15.65" rx="2.6" fill="#393939"/><rect x="941.9" y="925.0" width="15.65" height="15.65" rx="2.6" fill="#393939"/><rect x="941.9" y="945.8" width="15.65" height="15.65" rx="2.6" fill="#393939"/><rect x="941.9" y="966.7" width="15.65" height="15.65" rx="2.6" fill="#393939"/><rect x="941.9" y="987.5" width="15.65" height="15.65" rx="2.6" fill="#393939"/><rect x="941.9" y="1008.3" width="15.65" height="15.65" rx="2.6" fill="#393939"/><rect x="941.9" y="1029.2" width="15.65" height="15.65" rx="2.6" fill="#393939"/><rect x="941.9" y="1050.0" width="15.65" height="15.65" rx="2.6" fill="#393939"/><rect x="962.8" y="925.0" width="15.65" height="15.65" rx="2.6" fill="#393939"/><rect x="962.8" y="945.8" width="15.65" height="15.65" rx="2.6" fill="#393939"/><rect x="962.8" y="966.7" width="15.65" height="15.65" rx="2.6" fill="#393939"/><rect x="962.8" y="987.5" width="15.65" height="15.65" rx="2.6" fill="#393939"/><rect x="962.8" y="1008.3" width="15.65" height="15.65" rx="2.6" fill="#393939"/><rect x="962.8" y="1029.2" width="15.65" height="15.65" rx="2.6" fill="#393939"/><rect x="962.8" y="1050.0" width="15.65" height="15.65" rx="2.6" fill="#393939"/><rect x="983.6" y="925.0" width="15.65" height="15.65" rx="2.6" fill="#393939"/><rect x="983.6" y="945.8" width="15.65" height="15.65" rx="2.6" fill="#393939"/><rect x="983.6" y="966.7" width="15.65" height="15.65" rx="2.6" fill="#393939"/><rect x="983.6" y="987.5" width="15.65" height="15.65" rx="2.6" fill="#393939"/><rect x="983.6" y="1008.3" width="15.65" height="15.65" rx="2.6" fill="#393939"/><rect x="983.6" y="1029.2" width="15.65" height="15.65" rx="2.6" fill="#393939"/><rect x="983.6" y="1050.0" width="15.65" height="15.65" rx="2.6" fill="#393939"/><rect x="1004.4" y="925.0" width="15.65" height="15.65" rx="2.6" fill="#393939"/><rect x="1004.4" y="945.8" width="15.65" height="15.65" rx="2.6" fill="#393939"/><rect x="1004.4" y="966.7" width="15.65" height="15.65" rx="2.6" fill="#393939"/><rect x="1004.4" y="987.5" width="15.65" height="15.65" rx="2.6" fill="#393939"/><rect x="1004.4" y="1008.3" width="15.65" height="15.65" rx="2.6" fill="#393939"/><rect x="1004.4" y="1029.2" width="15.65" height="15.65" rx="2.6" fill="#393939"/><rect x="1004.4" y="1050.0" width="15.65" height="15.65" rx="2.6" fill="#393939"/><rect x="1025.2" y="925.0" width="15.65" height="15.65" rx="2.6" fill="#393939"/><rect x="1025.2" y="945.8" width="15.65" height="15.65" rx="2.6" fill="#393939"/><rect x="1025.2" y="966.7" width="15.65" height="15.65" rx="2.6" fill="#393939"/><rect x="1025.2" y="987.5" width="15.65" height="15.65" rx="2.6" fill="#393939"/><rect x="1025.2" y="1008.3" width="15.65" height="15.65" rx="2.6" fill="#393939"/><rect x="1025.2" y="1029.2" width="15.65" height="15.65" rx="2.6" fill="#393939"/><rect x="1025.2" y="1050.0" width="15.65" height="15.65" rx="2.6" fill="#393939"/><rect x="1046.1" y="925.0" width="15.65" height="15.65" rx="2.6" fill="#393939"/><rect x="1046.1" y="945.8" width="15.65" height="15.65" rx="2.6" fill="#393939"/><rect x="1046.1" y="966.7" width="15.65" height="15.65" rx="2.6" fill="#393939"/><rect x="1046.1" y="987.5" width="15.65" height="15.65" rx="2.6" fill="#393939"/><rect x="1046.1" y="1008.3" width="15.65" height="15.65" rx="2.6" fill="#393939"/><rect x="1046.1" y="1029.2" width="15.65" height="15.65" rx="2.6" fill="#393939"/><rect x="1046.1" y="1050.0" width="15.65" height="15.65" rx="2.6" fill="#a855f7"/><rect x="1066.9" y="925.0" width="15.65" height="15.65" rx="2.6" fill="#6b21a8"/><rect x="1066.9" y="945.8" width="15.65" height="15.65" rx="2.6" fill="#6b21a8"/><rect x="1066.9" y="966.7" width="15.65" height="15.65" rx="2.6" fill="#393939"/><rect x="1066.9" y="987.5" width="15.65" height="15.65" rx="2.6" fill="#393939"/><rect x="1066.9" y="1008.3" width="15.65" height="15.65" rx="2.6" fill="#a855f7"/><rect x="1066.9" y="1029.2" width="15.65" height="15.65" rx="2.6" fill="#393939"/><rect x="1066.9" y="1050.0" width="15.65" height="15.65" rx="2.6" fill="#393939"/><rect x="1087.7" y="925.0" width="15.65" height="15.65" rx="2.6" fill="#393939"/><rect x="1087.7" y="945.8" width="15.65" height="15.65" rx="2.6" fill="#a855f7"/><rect x="1087.7" y="966.7" width="15.65" height="15.65" rx="2.6" fill="#9333ea"/><rect x="1087.7" y="987.5" width="15.65" height="15.65" rx="2.6" fill="#d8b4fe"/><rect x="1087.7" y="1008.3" width="15.65" height="15.65" rx="2.6" fill="#6b21a8"/><rect x="1087.7" y="1029.2" width="15.65" height="15.65" rx="2.6" fill="#393939"/><rect x="1087.7" y="1050.0" width="15.65" height="15.65" rx="2.6" fill="#393939"/><rect x="1108.6" y="925.0" width="15.65" height="15.65" rx="2.6" fill="#393939"/><rect x="1108.6" y="945.8" width="15.65" height="15.65" rx="2.6" fill="#393939"/><rect x="1108.6" y="966.7" width="15.65" height="15.65" rx="2.6" fill="#a855f7"/><rect x="1108.6" y="987.5" width="15.65" height="15.65" rx="2.6" fill="#9333ea"/><rect x="1108.6" y="1008.3" width="15.65" height="15.65" rx="2.6" fill="#a855f7"/><rect x="1108.6" y="1029.2" width="15.65" height="15.65" rx="2.6" fill="#a855f7"/><rect x="1108.6" y="1050.0" width="15.65" height="15.65" rx="2.6" fill="#393939"/><rect x="1129.4" y="925.0" width="15.65" height="15.65" rx="2.6" fill="#393939"/><rect x="1129.4" y="945.8" width="15.65" height="15.65" rx="2.6" fill="#9333ea"/><rect x="1129.4" y="966.7" width="15.65" height="15.65" rx="2.6" fill="#d8b4fe"/><rect x="1129.4" y="987.5" width="15.65" height="15.65" rx="2.6" fill="#9333ea"/><rect x="1129.4" y="1008.3" width="15.65" height="15.65" rx="2.6" fill="#393939"/><rect x="1129.4" y="1029.2" width="15.65" height="15.65" rx="2.6" fill="#d8b4fe"/><rect x="1129.4" y="1050.0" width="15.65" height="15.65" rx="2.6" fill="#a855f7"/><rect x="1150.2" y="925.0" width="15.65" height="15.65" rx="2.6" fill="#393939"/><rect x="1150.2" y="945.8" width="15.65" height="15.65" rx="2.6" fill="#6b21a8"/><rect x="1150.2" y="966.7" width="15.65" height="15.65" rx="2.6" fill="#393939"/><rect x="1150.2" y="987.5" width="15.65" height="15.65" rx="2.6" fill="#a855f7"/><rect x="1150.2" y="1008.3" width="15.65" height="15.65" rx="2.6" fill="#393939"/><rect x="1150.2" y="1029.2" width="15.65" height="15.65" rx="2.6" fill="#393939"/><rect x="1150.2" y="1050.0" width="15.65" height="15.65" rx="2.6" fill="#d8b4fe"/><rect x="1171.1" y="925.0" width="15.65" height="15.65" rx="2.6" fill="#393939"/><rect x="1171.1" y="945.8" width="15.65" height="15.65" rx="2.6" fill="#393939"/><rect x="1171.1" y="966.7" width="15.65" height="15.65" rx="2.6" fill="#393939"/><rect x="1171.1" y="987.5" width="15.65" height="15.65" rx="2.6" fill="#d8b4fe"/></svg><div class="t mon" id="mOct" style="left:129.6px;top:894px">Oct</div><div class="t mon" id="mNov" style="left:212.9px;top:894px">Nov</div><div class="t mon" id="mDec" style="left:296.2px;top:894px">Dec</div><div class="t mon" id="mJan" style="left:400.4px;top:894px">Jan</div><div class="t mon" id="mFeb" style="left:483.7px;top:894px">Feb</div><div class="t mon" id="mMar" style="left:567.0px;top:894px">Mar</div><div class="t mon" id="mApr" style="left:671.1px;top:894px">Apr</div><div class="t mon" id="mMay" style="left:754.5px;top:894px">May</div><div class="t mon" id="mJun" style="left:837.8px;top:894px">Jun</div><div class="t mon" id="mJul" style="left:941.9px;top:894px">Jul</div><div class="t mon" id="mAug" style="left:1025.2px;top:894px">Aug</div><div class="t mon" id="mSep" style="left:1129.4px;top:894px">Sep</div>

<!-- card 6 -->
<div class="t h2" id="c6t" style="left:1329.5px;top:830.5px">Interview Type Breakdown</div>
<svg class="abs" style="left:1298px;top:795px" width="614" height="285" viewBox="1298 795 614 285"><path d="M1519.8 1028.9 L1519.80 905.90 A123.0 123.0 0 0 1 1557.32 911.76 Z" fill="#8b5cf6" stroke="#fff" stroke-width="1.3" stroke-linejoin="round"/><path d="M1519.8 1028.9 L1557.32 911.76 A123.0 123.0 0 0 1 1584.12 924.06 Z" fill="#06b6d4" stroke="#fff" stroke-width="1.3" stroke-linejoin="round"/><path d="M1519.8 1028.9 L1584.12 924.06 A123.0 123.0 0 0 1 1636.80 1066.85 Z" fill="#10b981" stroke="#fff" stroke-width="1.3" stroke-linejoin="round"/><path d="M1519.8 1028.9 L1636.80 1066.85 A123.0 123.0 0 1 1 1519.80 905.90 Z" fill="#f59e0b" stroke="#fff" stroke-width="1.3" stroke-linejoin="round"/><circle cx="1669.8" cy="968.9" r="9.9" fill="#8b5cf6"/><circle cx="1669.8" cy="1009.1" r="9.9" fill="#06b6d4"/><circle cx="1669.8" cy="1049.3" r="9.9" fill="#10b981"/></svg><div class="t leg" id="lC" style="left:1689px;top:959.4px">CUSTOM</div><div class="t leg" id="lB" style="left:1689px;top:999.6px">BEHAVIORAL</div><div class="t leg" id="lT" style="left:1689px;top:1039.8px">TECHNICAL</div>

</div>
</body>
</html>
